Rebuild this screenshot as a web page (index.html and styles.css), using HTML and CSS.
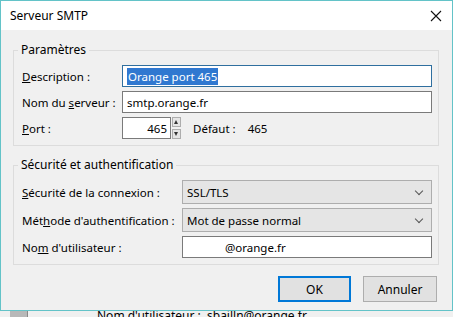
FILE: index.html
```html
<!DOCTYPE html>
<html lang="fr">
<head>
    <meta charset="UTF-8">
    <title>Serveur SMTP</title>
    <link rel="stylesheet" href="styles.css">
</head>
<body>
    <div class="window">
        <div class="titlebar">
            <span class="title">Serveur SMTP</span>
            <svg class="close" width="12" height="12" viewBox="0 0 12 12">
                <path d="M1 1 L11 11 M11 1 L1 11" stroke="#111" stroke-width="1.1" fill="none"/>
            </svg>
        </div>
        <div class="content">
            <fieldset class="group">
                <legend>Paramètres</legend>
                <div class="row">
                    <label class="label wide-1"><u>D</u>escription :</label>
                    <div class="field focused"><span class="selected">Orange port 465</span></div>
                </div>
                <div class="row">
                    <label class="label wide-1">Nom du <u>s</u>erveur :</label>
                    <div class="field">smtp.orange.fr</div>
                </div>
                <div class="row">
                    <label class="label wide-1"><u>P</u>ort :</label>
                    <div class="field port">465</div>
                    <div class="spinner">
                        <span class="spin up"></span>
                        <span class="spin down"></span>
                    </div>
                    <span class="default-label">Défaut :</span>
                    <span class="default-value">465</span>
                </div>
            </fieldset>

            <fieldset class="group second">
                <legend>Sécurité et authentification</legend>
                <div class="row tall">
                    <label class="label wide-2"><u>S</u>écurité de la connexion :</label>
                    <div class="select">SSL/TLS<span class="chevron"></span></div>
                </div>
                <div class="row tall">
                    <label class="label wide-2">Mét<u>h</u>ode d'authentification :</label>
                    <div class="select">Mot de passe normal<span class="chevron"></span></div>
                </div>
                <div class="row">
                    <label class="label wide-2">No<u>m</u> d'utilisateur :</label>
                    <div class="field user">@orange.fr</div>
                </div>
            </fieldset>

            <div class="buttons">
                <button class="btn default">OK</button>
                <button class="btn">Annuler</button>
            </div>
        </div>
    </div>
    <div class="behind">
        <span class="tab"></span>
        <span class="behind-text">Nom d'utilisateur :&nbsp; sbailln@orange.fr</span>
    </div>
</body>
</html>
```

FILE: styles.css
```css
body {
    margin: 0;
    width: 453px;
    height: 317px;
    overflow: hidden;
    font-family: 'Noto Sans', 'Open Sans', sans-serif;
    font-size: 11.5px;
    color: #000;
    background-color: #dcdcdc;
}
.window {
    border: 1px solid #63c3c8;
    background-color: #f0f0f0;
    box-sizing: border-box;
    height: 311px;
}
.titlebar {
    height: 29px;
    background-color: #fff;
    display: flex;
    align-items: center;
    justify-content: space-between;
    padding: 0 10px 0 9px;
}
.title {
    font-size: 12px;
}
.content {
    padding: 12px 13px 0 12px;
}
.group {
    margin: 0;
    border: 1px solid #dcdcdc;
    padding: 2px 6px 6px 8px;
}
.group legend {
    padding: 0 3px;
    margin-left: -4px;
    line-height: 16px;
    font-size: 12px;
}
.second {
    margin-top: 11px;
}
.row {
    display: flex;
    align-items: center;
    height: 22px;
    margin-top: 4px;
}
.row.tall {
    height: 24px;
}
.group .row:first-of-type {
    margin-top: 5px;
}
.label {
    flex-shrink: 0;
}
.wide-1 {
    width: 100px;
}
.wide-2 {
    width: 160px;
}
.field {
    flex: 1;
    height: 22px;
    box-sizing: border-box;
    border: 1px solid #7a7a7a;
    background-color: #fff;
    display: flex;
    align-items: center;
    padding: 0 4px;
}
.field.focused {
    border-color: #2f6f9f;
}
.selected {
    background-color: #3078d0;
    color: #fff;
    padding: 1px 1px;
}
.field.port {
    flex: none;
    width: 49px;
    justify-content: flex-end;
    padding-right: 3px;
}
.field.user {
    padding-left: 42px;
}
.spinner {
    width: 9px;
    height: 22px;
    display: flex;
    flex-direction: column;
    justify-content: space-between;
    margin-left: 1px;
}
.spin {
    height: 10px;
    border: 1px solid #adadad;
    box-sizing: border-box;
    background-color: #e5e5e5;
    position: relative;
}
.spin::after {
    content: '';
    position: absolute;
    left: 1px;
    border-left: 2.5px solid transparent;
    border-right: 2.5px solid transparent;
}
.up::after {
    top: 2px;
    border-bottom: 4px solid #333;
}
.down::after {
    top: 2px;
    border-top: 4px solid #333;
}
.default-label {
    margin-left: 12px;
}
.default-value {
    margin-left: 12px;
}
.select {
    flex: 1;
    height: 24px;
    box-sizing: border-box;
    border: 1px solid #adadad;
    background-color: #e5e5e5;
    display: flex;
    align-items: center;
    padding: 0 4px;
    position: relative;
}
.chevron {
    position: absolute;
    right: 9px;
    top: 7px;
    width: 5px;
    height: 5px;
    border-right: 1px solid #555;
    border-bottom: 1px solid #555;
    transform: rotate(45deg);
}
.buttons {
    display: flex;
    justify-content: flex-end;
    gap: 12px;
    margin-top: 11px;
    padding-right: 2px;
}
.btn {
    font-family: inherit;
    font-size: 12px;
    width: 74px;
    height: 26px;
    background-color: #e1e1e1;
    border: 1px solid #adadad;
    padding: 0;
    color: #000;
}
.btn.default {
    width: 73px;
    border: 2px solid #0078d7;
}
.behind {
    height: 6px;
    overflow: hidden;
    display: flex;
    background-color: #f0f0f0;
}
.tab {
    width: 17px;
    margin-left: 10px;
    background-color: #b8b8b8;
    border-right: 1px solid #888;
}
.behind-text {
    margin-left: 69px;
    line-height: 12px;
    margin-top: -1px;
    font-size: 12px;
}
```
